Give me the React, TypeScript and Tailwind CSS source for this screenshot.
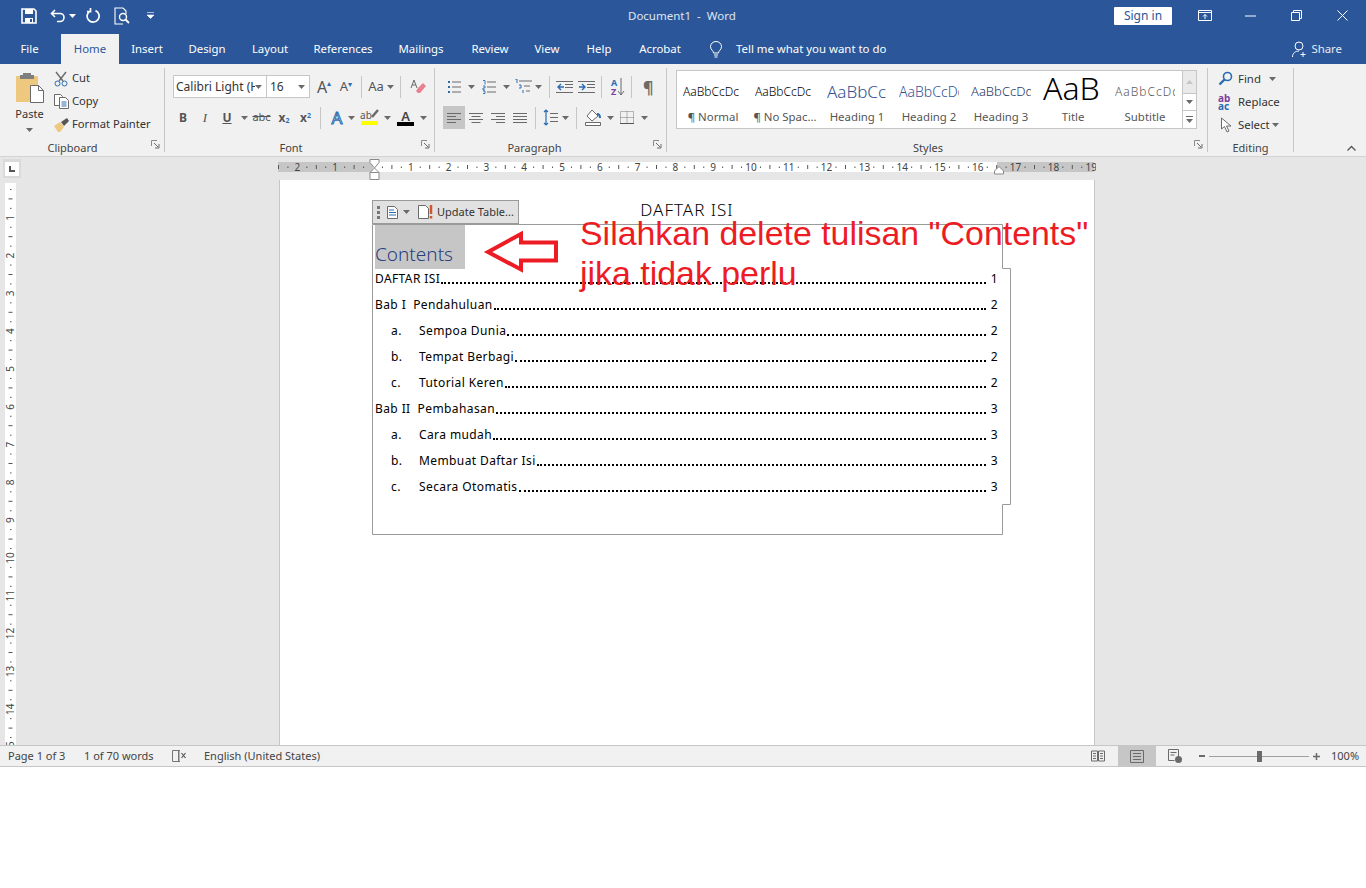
import type { ReactNode } from "react";

const tabs = [
  { label: "File", w: "w-[59px]" },
  { label: "Home", w: "w-[58px]", active: true },
  { label: "Insert", w: "w-[56px]" },
  { label: "Design", w: "w-[64px]" },
  { label: "Layout", w: "w-[62px]" },
  { label: "References", w: "w-[84px]" },
  { label: "Mailings", w: "w-[72px]" },
  { label: "Review", w: "w-[66px]" },
  { label: "View", w: "w-[48px]" },
  { label: "Help", w: "w-[56px]" },
  { label: "Acrobat", w: "w-[66px]" },
];

const styleItems = [
  { preview: "AaBbCcDc", label: "¶ Normal", cls: "text-[12px] text-black" },
  { preview: "AaBbCcDc", label: "¶ No Spac...", cls: "text-[12px] text-black" },
  { preview: "AaBbCcDd", label: "Heading 1", cls: "text-[17px] text-[#2f5496]" },
  { preview: "AaBbCcDd", label: "Heading 2", cls: "text-[14px] text-[#2f5496]" },
  { preview: "AaBbCcDd", label: "Heading 3", cls: "text-[13px] text-[#1f3763]" },
  { preview: "AaB", label: "Title", cls: "text-[32px] text-black -mt-2" },
  { preview: "AaBbCcDd", label: "Subtitle", cls: "text-[12px] tracking-[1px] text-[#5a5a5a]" },
];

const tocRows = [
  { text: "DAFTAR ISI", page: "1" },
  { text: "Bab I  Pendahuluan", page: "2" },
  { mark: "a.", text: "Sempoa Dunia", page: "2" },
  { mark: "b.", text: "Tempat Berbagi", page: "2" },
  { mark: "c.", text: "Tutorial Keren", page: "2" },
  { text: "Bab II  Pembahasan", page: "3" },
  { mark: "a.", text: "Cara mudah", page: "3" },
  { mark: "b.", text: "Membuat Daftar Isi", page: "3" },
  { mark: "c.", text: "Secara Otomatis", page: "3" },
];

const CM = 37.8;

const Caret = ({ white }: { white?: boolean }) => (
  <svg width="7" height="4" viewBox="0 0 7 4" className="shrink-0">
    <path d="M0 0h7L3.5 4z" fill={white ? "#fff" : "#6a6a6a"} />
  </svg>
);

const Launcher = () => (
  <svg width="9" height="9" viewBox="0 0 9 9" className="absolute right-[4px] bottom-[3px]">
    <path d="M.5 6V.5H6" fill="none" stroke="#8a8a8a" />
    <path d="M3 3l4 4M8 4v4H4" fill="none" stroke="#6a6a6a" />
  </svg>
);

const Sep = ({ h = "h-[22px]", m = "mx-0" }: { h?: string; m?: string }) => (
  <div className={`w-px bg-[#c6c6c6] shrink-0 ${h} ${m}`} />
);

const Cell = ({ w, children, on }: { w: string; children: ReactNode; on?: boolean }) => (
  <div className={`${w} h-[23px] flex items-center justify-center shrink-0 ${on ? "bg-[#c6c6c6]" : ""}`}>
    {children}
  </div>
);

const Lines = ({ d }: { d: string }) => (
  <svg width="16" height="14" viewBox="0 0 16 14">
    <path d={d} stroke="#6a6a6a" fill="none" />
  </svg>
);

const Group = ({
  w,
  label,
  pad = "",
  launcher = true,
  children,
}: {
  w: string;
  label: string;
  pad?: string;
  launcher?: boolean;
  children: ReactNode;
}) => (
  <div className={`${w} h-[84px] relative border-r border-[#c6c6c6] shrink-0`}>
    <div className="h-[72px] flow-root">{children}</div>
    <div className={`h-[16px] leading-[16px] text-center text-[11px] text-[#444] ${pad}`}>{label}</div>
    {launcher && <Launcher />}
  </div>
);

function TitleBar() {
  return (
    <div className="h-[34px] flex items-center text-white shrink-0 relative pb-[3px]">
      <div className="flex items-center ml-[21px]">
        <svg width="16" height="16" viewBox="0 0 16 16">
          <path d="M1 1h12l2 2v12H1z" fill="none" stroke="#fff" strokeWidth="1.6" />
          <path d="M4 1h8v5H4zM4 10h8v5H4z" fill="#fff" />
          <path d="M9 11h2v3H9z" fill="#2b579a" />
        </svg>
        <svg width="16" height="14" viewBox="0 0 16 14" className="ml-[13px]">
          <path d="M5 1L1.5 4.5 5 8M2 4.5h8a4 4 0 0 1 0 8H7" fill="none" stroke="#fff" strokeWidth="1.6" />
        </svg>
        <div className="ml-[3px]"><Caret white /></div>
        <svg width="15" height="15" viewBox="0 0 15 15" className="ml-[9px]">
          <path d="M10.5 2.6a6 6 0 1 1-5 .1M5.5 0v3.6H2" fill="none" stroke="#fff" strokeWidth="1.7" />
        </svg>
        <svg width="16" height="18" viewBox="0 0 16 18" className="ml-[14px]">
          <path d="M9 1H1v16h8M9 1l3 3v3" fill="none" stroke="#fff" strokeWidth="1.1" />
          <circle cx="9" cy="10" r="3.5" fill="none" stroke="#fff" strokeWidth="1.4" />
          <path d="M11.5 12.5l3.5 3.5" stroke="#fff" strokeWidth="1.8" />
        </svg>
        <svg width="7" height="7" viewBox="0 0 7 7" className="ml-[17px]">
          <path d="M0 .5h7M0 3h7l-3.5 3.5z" fill="#fff" stroke="#fff" strokeWidth=".6" />
        </svg>
      </div>
      <div className="absolute left-[628px] top-[8px] text-[11.5px] leading-[16px] text-[#dfe6f1] whitespace-pre">Document1  -  Word</div>
      <div className="ml-auto flex items-center">
        <div className="w-[58px] h-[18px] bg-white rounded-[1px] text-[#2b579a] text-[12px] leading-[18px] text-center mr-[26px]">Sign in</div>
        <svg width="14" height="11" viewBox="0 0 14 11" className="mr-[33px]">
          <path d="M.5.5h13v10H.5zM.5 2.5h13" fill="none" stroke="#fff" />
          <path d="M7 9V4.500M5 6.500l2-2 2 2" fill="none" stroke="#fff" />
        </svg>
        <svg width="11" height="2" viewBox="0 0 11 2" className="mr-[35px]"><path d="M0 1h11" stroke="#fff" /></svg>
        <svg width="11" height="11" viewBox="0 0 11 11" className="mr-[35px]">
          <path d="M.5 2.500h8v8h-8zM2.500 2.500v-2h8v8h-2" fill="none" stroke="#fff" />
        </svg>
        <svg width="11" height="11" viewBox="0 0 11 11" className="mr-[18px]">
          <path d="M.5.5l10 10M10.500.5l-10 10" stroke="#fff" />
        </svg>
      </div>
    </div>
  );
}

function TabBar() {
  return (
    <div className="h-[30px] flex text-[11.4px] text-white shrink-0">
      {tabs.map((t) => (
        <div
          key={t.label}
          className={`${t.w} flex items-center justify-center ${t.active ? "bg-[#f1f1f1] text-[#2b579a] ml-[2px]" : ""}`}
        >
          {t.label}
        </div>
      ))}
      <div className="flex items-center ml-[16px]">
        <svg width="14" height="17" viewBox="0 0 14 17">
          <path d="M4.500 12C4.500 9.500 1.500 9 1.500 5.500a5.500 5 0 0 1 11 0C12.500 9 9.500 9.500 9.500 12zM5 14h4M5.500 16h3" fill="none" stroke="#fff" />
        </svg>
        <span className="ml-[13px]">Tell me what you want to do</span>
      </div>
      <div className="ml-auto flex items-center mr-[24px] text-[#e6ebf3]">
        <svg width="15" height="17" viewBox="0 0 15 17">
          <circle cx="7" cy="5" r="4" fill="none" stroke="#fff" />
          <path d="M.5 16c0-4 3-6 6.500-6M11 11v5M8.500 13.500h5" fill="none" stroke="#fff" />
        </svg>
        <span className="ml-[4px]">Share</span>
      </div>
    </div>
  );
}

function Clipboard() {
  return (
    <Group w="w-[165px]" label="Clipboard" pad="pr-[19px]">
      <div className="flex">
        <div className="w-[54px] pl-[5px] flex flex-col items-center text-[11px]">
          <svg width="30" height="31" viewBox="0 0 30 31" className="mt-[4px]">
            <path d="M1 4h22v26H1z" fill="#edc87e" />
            <path d="M8 1h8v2h3v4H5V3h3z" fill="#7f7f7f" />
            <path d="M15.500 13.500h8l5 5v12h-13z" fill="#fff" stroke="#6a6a6a" />
            <path d="M23.500 13.500v5h5" fill="none" stroke="#6a6a6a" />
          </svg>
          <span className="leading-[16px] mt-[3px] text-[#333]">Paste</span>
          <div className="mt-[6px]"><Caret /></div>
        </div>
        <div className="flex flex-col text-[11.2px] text-[#333] -mt-[1px]">
          {[
            {
              label: "Cut",
              icon: (
                <svg width="14" height="16" viewBox="0 0 14 16">
                  <path d="M2 1l7 9M12 1L5 10" stroke="#6a6a6a" strokeWidth="1.4" fill="none" />
                  <circle cx="3.500" cy="12.500" r="2.500" fill="none" stroke="#2b6cb0" />
                  <circle cx="10.500" cy="12.500" r="2.500" fill="none" stroke="#2b6cb0" />
                </svg>
              ),
            },
            {
              label: "Copy",
              icon: (
                <svg width="15" height="15" viewBox="0 0 15 15">
                  <path d="M.5.5h6l2 2v9H.5z" fill="#fff" stroke="#6a6a6a" />
                  <path d="M5.500 3.500h6l3 3v8h-9z" fill="#fff" stroke="#6a6a6a" />
                  <path d="M7.500 8h5M7.500 10h5M7.500 12h5" stroke="#2b6cb0" />
                </svg>
              ),
            },
            {
              label: "Format Painter",
              icon: (
                <svg width="16" height="15" viewBox="0 0 16 15">
                  <path d="M0 9l6-4 4 5-4 5H4z" fill="#edc87e" />
                  <path d="M7 5l6-4 2 3-5 5z" fill="#555" />
                </svg>
              ),
            },
          ].map((r) => (
            <div key={r.label} className="h-[23px] flex items-center">
              <div className="w-[18px] flex justify-start">{r.icon}</div>
              <span className="whitespace-nowrap">{r.label}</span>
            </div>
          ))}
        </div>
      </div>
    </Group>
  );
}

const LetterBtn = ({ cls, children }: { cls: string; children: ReactNode }) => (
  <span className={`text-[#555] ${cls}`}>{children}</span>
);

function FontGroup() {
  return (
    <Group w="w-[270px]" label="Font" pad="pr-[17px]">
      <div className="flex items-center pl-[8px] pt-[7px] h-[30px] text-[#333]">
        <div className="w-[94px] h-[23px] border border-[#c6c6c6] bg-white flex items-center pl-[2px] pr-[4px] text-[12px]">
          <span className="whitespace-nowrap overflow-hidden flex-1">Calibri Light (H</span>
          <Caret />
        </div>
        <div className="w-[44px] -ml-px h-[23px] border border-[#c6c6c6] bg-white flex items-center pl-[3px] pr-[4px] text-[12px]">
          <span className="flex-1">16</span>
          <Caret />
        </div>
        <div className="w-[22px] ml-[3px] text-center text-[16px] text-[#555] leading-none">
          A<span className="text-[8px] align-top text-[#2b6cb0]">▴</span>
        </div>
        <div className="w-[22px] text-center text-[13px] text-[#555] leading-none">
          A<span className="text-[8px] align-top text-[#2b6cb0]">▾</span>
        </div>
        <Sep m="ml-[4px]" />
        <div className="w-[38px] flex items-center justify-center gap-[3px] text-[13px] text-[#555]">Aa<Caret /></div>
        <Sep />
        <svg width="16" height="16" viewBox="0 0 16 16" className="ml-[9px]">
          <path d="M8 9l5-5 3 3-6 7H8L6 12z" fill="#e8808f" />
          <path d="M1 9L4 1l3 8M2.200 6h3.600" fill="none" stroke="#6a6a6a" />
        </svg>
      </div>
      <div className="flex items-center pl-[7px] mt-[8px] text-[12px]">
        <Cell w="w-[22px]"><LetterBtn cls="font-bold">B</LetterBtn></Cell>
        <Cell w="w-[22px]"><LetterBtn cls="italic font-['Liberation_Serif',serif] text-[13px]">I</LetterBtn></Cell>
        <Cell w="w-[22px]"><LetterBtn cls="font-bold underline">U</LetterBtn></Cell>
        <Cell w="w-[12px]"><Caret /></Cell>
        <Cell w="w-[23px]"><LetterBtn cls="line-through text-[11px]">abc</LetterBtn></Cell>
        <Cell w="w-[22px]"><LetterBtn cls="font-bold">x<sub className="text-[7px] text-[#2b6cb0]">2</sub></LetterBtn></Cell>
        <Cell w="w-[21px]"><LetterBtn cls="font-bold">x<sup className="text-[7px] text-[#2b6cb0]">2</sup></LetterBtn></Cell>
        <Sep m="ml-[4px] mr-[7px]" />
        <Cell w="w-[18px]">
          <span className="text-[17px] leading-none text-white [-webkit-text-stroke:1px_#2b6cb0]">A</span>
        </Cell>
        <Cell w="w-[10px]"><Caret /></Cell>
        <Cell w="w-[27px]">
          <div className="relative flex flex-col items-center">
            <span className="text-[10px] leading-[11px] text-[#555] pr-[7px]">ab</span>
            <svg width="9" height="11" viewBox="0 0 9 11" className="absolute right-0 -top-[1px]">
              <path d="M8 1L2 8" stroke="#6a6a6a" strokeWidth="2.500" />
            </svg>
            <div className="w-[17px] h-[4px] bg-[#ffff00]" />
          </div>
        </Cell>
        <Cell w="w-[9px]"><Caret /></Cell>
        <Cell w="w-[27px]">
          <div className="flex flex-col items-center">
            <span className="text-[13px] leading-[12px] text-[#444] font-semibold">A</span>
            <div className="w-[17px] h-[4px] bg-black" />
          </div>
        </Cell>
        <Cell w="w-[8px]"><Caret /></Cell>
      </div>
    </Group>
  );
}

function Paragraph() {
  return (
    <Group w="w-[232px]" label="Paragraph" pad="pr-[32px]">
      <div className="flex items-center pl-[8px] pt-[7px] h-[30px]">
        <Cell w="w-[22px]">
          <svg width="14" height="14" viewBox="0 0 14 14">
            <path d="M1 1h2v2H1zM1 6h2v2H1zM1 11h2v2H1z" fill="#2b6cb0" />
            <path d="M5 2h9M5 7h9M5 12h9" stroke="#6a6a6a" />
          </svg>
        </Cell>
        <Cell w="w-[13px]"><Caret /></Cell>
        <Cell w="w-[22px]">
          <svg width="14" height="14" viewBox="0 0 14 14">
            <path d="M1 .5h2v4M1 6h2v2H1v2h2M1 11h2v2.500H1" fill="none" stroke="#2b6cb0" strokeWidth=".9" />
            <path d="M5 2h9M5 7h9M5 12h9" stroke="#6a6a6a" />
          </svg>
        </Cell>
        <Cell w="w-[13px]"><Caret /></Cell>
        <Cell w="w-[20px]">
          <svg width="18" height="15" viewBox="0 0 18 15">
            <path d="M1 0h2v4M5 6h2v3H5M9 11v3" fill="none" stroke="#2b6cb0" />
            <path d="M5 2h13M10 7h6M12 12h4" stroke="#6a6a6a" />
          </svg>
        </Cell>
        <Cell w="w-[11px]"><Caret /></Cell>
        <Sep m="ml-[5px] mr-[4px]" />
        <Cell w="w-[20px]">
          <svg width="17" height="12" viewBox="0 0 17 12">
            <path d="M0 .5h17M9 3.500h8M9 6.500h8M0 11.500h17" stroke="#6a6a6a" />
            <path d="M8 6H2M5 3L2 6l3 3" fill="none" stroke="#2b6cb0" strokeWidth="1.4" />
          </svg>
        </Cell>
        <Cell w="w-[24px]">
          <svg width="17" height="12" viewBox="0 0 17 12">
            <path d="M0 .5h17M9 3.500h8M9 6.500h8M0 11.500h17" stroke="#6a6a6a" />
            <path d="M1 6h6M4 3l3 3-3 3" fill="none" stroke="#2b6cb0" strokeWidth="1.4" />
          </svg>
        </Cell>
        <Sep m="ml-[3px] mr-[5px]" />
        <Cell w="w-[22px]">
          <div className="flex items-center">
            <div className="flex flex-col text-[9px] leading-[9px] font-bold">
              <span className="text-[#2b6cb0]">A</span>
              <span className="text-[#7c3fa0]">Z</span>
            </div>
            <svg width="8" height="18" viewBox="0 0 8 18"><path d="M4 0v17M1 13l3 4 3-4" fill="none" stroke="#6a6a6a" /></svg>
          </div>
        </Cell>
        <Sep m="ml-[2px] mr-[11px]" />
        <span className="text-[16px] font-bold text-[#6a6a6a] leading-none">¶</span>
      </div>
      <div className="flex items-center pl-[8px] mt-[8px]">
        <Cell w="w-[22px]" on><Lines d="M1 2.500h14M1 5.500h9M1 8.500h14M1 11.500h9" /></Cell>
        <Cell w="w-[22px]"><Lines d="M1 2.500h14M3.500 5.500h9M1 8.500h14M3.500 11.500h9" /></Cell>
        <Cell w="w-[22px]"><Lines d="M1 2.500h14M6 5.500h9M1 8.500h14M6 11.500h9" /></Cell>
        <Cell w="w-[22px]"><Lines d="M1 2.500h14M1 5.500h14M1 8.500h14M1 11.500h14" /></Cell>
        <Sep m="ml-[4px] mr-[4px]" />
        <Cell w="w-[20px]">
          <svg width="15" height="17" viewBox="0 0 15 17">
            <path d="M3 1v15M1 3l2-2 2 2M1 14l2 2 2-2" fill="none" stroke="#2b6cb0" strokeWidth="1.2" />
            <path d="M7 4.500h8M7 8.500h8M7 12.500h8" stroke="#6a6a6a" />
          </svg>
        </Cell>
        <Cell w="w-[11px]"><Caret /></Cell>
        <Sep m="ml-[5px] mr-[4px]" />
        <Cell w="w-[24px]">
          <svg width="16" height="17" viewBox="0 0 16 17">
            <path d="M7 1L2 7l5 5 6-5z" fill="#fff" stroke="#6a6a6a" />
            <path d="M12 5c2 0 3 2 3 4" fill="none" stroke="#2b6cb0" strokeWidth="2" />
            <path d="M.5 13.500h15v3H.5z" fill="#fff" stroke="#6a6a6a" />
          </svg>
        </Cell>
        <Cell w="w-[10px]"><Caret /></Cell>
        <Cell w="w-[24px]">
          <svg width="14" height="13" viewBox="0 0 14 13">
            <path d="M.5.500h13v12H.5zM7 .5v12M.5 6.500h13" fill="none" stroke="#777" strokeDasharray="1 1" />
            <path d="M0 12.500h14" stroke="#555" />
          </svg>
        </Cell>
        <Cell w="w-[10px]"><Caret /></Cell>
      </div>
    </Group>
  );
}

function Styles() {
  return (
    <Group w="w-[541px]" label="Styles" pad="pr-[18px]">
      <div className="ml-[9px] mt-[2px] w-[521px] h-[59px] flex bg-white border border-[#c6c6c6]">
        <div className="flex-1 flex">
          {styleItems.map((s, i) => (
            <div key={i} className="w-[72px] flex flex-col items-center shrink-0">
              <div className="w-[60px] h-[38px] pt-[3px] overflow-hidden flex items-center whitespace-nowrap font-light">
                <span className={`leading-none ${s.cls}`}>{s.preview}</span>
              </div>
              <div className="text-[11.4px] leading-[16px] text-[#555] whitespace-nowrap">{s.label}</div>
            </div>
          ))}
        </div>
        <div className="w-[14px] flex flex-col border-l border-[#c6c6c6] shrink-0 items-stretch">
          <div className="h-[22px] bg-[#eaeaea] flex items-center justify-center">
            <svg width="7" height="4" viewBox="0 0 7 4"><path d="M0 4h7L3.500 0z" fill="#c6c6c6" /></svg>
          </div>
          <div className="h-[18px] border-y border-[#c6c6c6] flex items-center justify-center"><Caret /></div>
          <div className="flex-1 flex flex-col items-center justify-center gap-[2px]">
            <div className="w-[7px] h-px bg-[#6a6a6a]" />
            <Caret />
          </div>
        </div>
      </div>
    </Group>
  );
}

function Editing() {
  return (
    <Group w="w-[86px]" label="Editing" launcher={false}>
      <div className="flex flex-col -mt-[1px] pl-[10px] text-[11.4px] text-[#333]">
        <div className="h-[23px] flex items-center">
          <svg width="15" height="15" viewBox="0 0 15 15">
            <circle cx="9.500" cy="5.500" r="4" fill="none" stroke="#2b6cb0" strokeWidth="1.6" />
            <path d="M6.500 8.500L1.500 13.500" stroke="#2b6cb0" strokeWidth="2.400" />
          </svg>
          <span className="ml-[5px]">Find</span>
          <div className="ml-[8px]"><Caret /></div>
        </div>
        <div className="h-[23px] flex items-center">
          <div className="w-[15px] text-[10px] leading-[8px] font-bold">
            <div className="text-[#7c3fa0]">ab</div>
            <div className="text-[#2b6cb0]">ac</div>
          </div>
          <span className="ml-[5px]">Replace</span>
        </div>
        <div className="h-[23px] flex items-center">
          <svg width="13" height="16" viewBox="0 0 13 16" className="ml-[2px]">
            <path d="M1.500 1v11l3-2.500L7 15l2-1-2.500-5H11z" fill="#fff" stroke="#6a6a6a" />
          </svg>
          <span className="ml-[5px]">Select</span>
          <div className="ml-[2px]"><Caret /></div>
        </div>
      </div>
    </Group>
  );
}

function HorizontalRuler() {
  const marks = [];
  for (let q = -10; q <= 76; q++) {
    const x = 95 + (q * CM) / 4;
    if (x < 0 || x > 816) continue;
    if (q % 4 === 0) {
      if (q !== 0) {
        marks.push(
          <text key={q} x={x} y="8.500" textAnchor="middle" fontSize="10" fill="#444">
            {Math.abs(q / 4)}
          </text>
        );
      }
    } else if (q % 2 === 0) {
      marks.push(<path key={q} d={`M${x} 3v4`} stroke="#555" />);
    } else {
      marks.push(<path key={q} d={`M${x} 4.500v1.500`} stroke="#555" />);
    }
  }
  return (
    <svg width="818" height="23" viewBox="0 0 818 23" className="ml-[278px] shrink-0">
      <g transform="translate(0 5)">
        <rect x="0" y="0" width="95" height="10" fill="#c6c6c6" />
        <rect x="95" y="0" width="624" height="10" fill="#fff" />
        <rect x="719" y="0" width="97" height="10" fill="#c6c6c6" />
        {marks}
      </g>
      <path d="M92 2.500h9v3l-4.500 5.500L92 5.500z" fill="#fff" stroke="#8a8a8a" />
      <path d="M92 15.500l4.500-4.500 4.500 4.500z" fill="#fff" stroke="#8a8a8a" />
      <path d="M92 15.500h9v7h-9z" fill="#fff" stroke="#8a8a8a" />
      <path d="M716.500 14l4.500-4.500 4.500 4.500v3h-9z" fill="#fff" stroke="#8a8a8a" />
    </svg>
  );
}

function VerticalRuler() {
  const marks = [];
  for (let q = 1; q <= 60; q++) {
    const y = (q * CM) / 4 - 3;
    if (q % 4 === 0) {
      marks.push(
        <text key={q} transform={`translate(9 ${y}) rotate(-90)`} textAnchor="middle" fontSize="10" fill="#444">
          {q / 4}
        </text>
      );
    } else if (q % 2 === 0) {
      marks.push(<path key={q} d={`M3.500 ${y}h4`} stroke="#555" />);
    } else {
      marks.push(<path key={q} d={`M5 ${y}h1.500`} stroke="#555" />);
    }
  }
  return (
    <svg width="11" height="562" viewBox="0 0 11 562" className="ml-[5px] mt-[3px] bg-white shrink-0">
      {marks}
    </svg>
  );
}

function Page() {
  return (
    <div className="relative w-[816px] h-[565px] ml-[263px] bg-white border-x border-[#c6c6c6] shrink-0 overflow-hidden">
      <div className="pt-[21px] text-center text-[17px] tracking-[1px] leading-[18px] text-black font-light">
        DAFTAR ISI
      </div>
      <div className="relative ml-[92px] mt-[5px] w-[640px] h-[312px] pt-[1px] pl-[3px]">
        <svg width="640" height="312" viewBox="0 0 640 312" className="absolute left-0 top-0">
          <path d="M.5.500H630.500V44.500H638.500V280.500H630.500V310.500H.5z" fill="none" stroke="#9a9a9a" />
        </svg>
        <div className="relative w-[90px] h-[44px] -mb-[3px] bg-[#c6c6c6] flex items-end text-[19px] leading-[26px] text-[#27407f] font-light pb-[2px]">
          Contents
        </div>
        <div className="relative w-[623px]">
          {tocRows.map((r, i) => (
            <div key={i} className="h-[26px] flex items-center text-[12px] tracking-[0.4px] text-black whitespace-pre">
              {r.mark && <span className="w-[44px] pl-[16px] shrink-0">{r.mark}</span>}
              <span>{r.text}</span>
              <span className="flex-1 mt-[8px] mx-[1px] border-b-2 border-dotted border-black" />
              <span className="w-[11px] text-right">{r.page}</span>
            </div>
          ))}
        </div>
      </div>
      <div className="absolute left-[92px] top-[20px] w-[147px] h-[24px] bg-[#e1e1e1] border border-[#9a9a9a] flex items-center text-[11px] text-[#333]">
        <div className="w-[3px] ml-[4px] flex flex-col gap-[2px]">
          <div className="h-[3px] bg-[#777]" />
          <div className="h-[3px] bg-[#777]" />
          <div className="h-[3px] bg-[#777]" />
        </div>
        <svg width="11" height="13" viewBox="0 0 11 13" className="ml-[7px]">
          <path d="M.5.500h7l3 3v9H.5z" fill="#fff" stroke="#6a6a6a" />
          <path d="M2 4h5M2 6.500h7M2 9h7" stroke="#2b6cb0" />
        </svg>
        <div className="ml-[5px]"><Caret /></div>
        <svg width="16" height="14" viewBox="0 0 16 14" className="ml-[8px]">
          <path d="M.5.500h7l3 3v10H.5z" fill="#fff" stroke="#6a6a6a" />
          <path d="M13 0v9" stroke="#d2552f" strokeWidth="2.500" />
          <path d="M13 11v2.500" stroke="#d2552f" strokeWidth="2.500" />
        </svg>
        <span className="ml-[3px] whitespace-nowrap">Update Table...</span>
      </div>
      <svg width="76" height="44" viewBox="0 0 76 44" className="absolute left-[203px] top-[51px]">
        <path d="M5 21L38 3V11.500H73V29.500H38V38.500z" fill="none" stroke="#ed1c24" strokeWidth="4" />
      </svg>
      <div className="absolute left-[300px] top-[33px] text-[33.900px] leading-[40px] text-[#ed1c24] font-['Liberation_Sans',sans-serif] whitespace-nowrap">
        <div>Silahkan delete tulisan "Contents"</div>
        <div>jika tidak perlu</div>
      </div>
    </div>
  );
}

function StatusBar() {
  return (
    <div className="h-[22px] bg-[#f1f1f1] border-y border-[#c6c6c6] flex items-center text-[11px] text-[#444] shrink-0">
      <span className="ml-[8px] w-[76px]">Page 1 of 3</span>
      <span className="w-[88px]">1 of 70 words</span>
      <svg width="15" height="14" viewBox="0 0 15 14" className="mr-[17px]">
        <path d="M6.500 1.500H.5v11h6M6.500 1v12M8 1.500h-1v11h1" fill="none" stroke="#777" />
        <path d="M9.500 4l4 5M13.500 4l-4 5" stroke="#555" strokeWidth="1.2" />
      </svg>
      <span>English (United States)</span>
      <div className="ml-auto flex items-center h-full">
        <svg width="14" height="13" viewBox="0 0 14 13" className="mr-[13px]">
          <path d="M.5 1h6v10h-6zM7.500 1h6v10h-6zM2 3.500h3M2 6h3M2 8.500h3M9 3.500h3M9 6h3M9 8.500h3" fill="none" stroke="#6a6a6a" />
        </svg>
        <div className="w-[38px] h-full bg-[#c6c6c6] flex items-center justify-center">
          <svg width="14" height="13" viewBox="0 0 14 13">
            <path d="M.5.500h13v12H.5zM3 3.500h8M3 6.500h8M3 9.500h8" fill="none" stroke="#6a6a6a" />
          </svg>
        </div>
        <svg width="14" height="14" viewBox="0 0 14 14" className="ml-[12px]">
          <path d="M.5.500h10v9M.5.500v11h6M2.500 3.500h6M2.500 6h4" fill="none" stroke="#6a6a6a" />
          <circle cx="10.500" cy="10.500" r="3.500" fill="#6a6a6a" />
        </svg>
        <div className="ml-[17px] w-[6px] h-[2px] bg-[#6a6a6a]" />
        <div className="ml-[4px] relative w-[100px] h-px bg-[#a0a0a0]">
          <div className="absolute left-[48px] -top-[5px] w-[5px] h-[11px] bg-[#6a6a6a]" />
        </div>
        <svg width="7" height="7" viewBox="0 0 7 7" className="ml-[4px]">
          <path d="M3.500 0v7M0 3.500h7" stroke="#6a6a6a" strokeWidth="1.500" />
        </svg>
        <span className="ml-[11px] w-[35px]">100%</span>
      </div>
    </div>
  );
}

export default function App() {
  return (
    <div className="w-[1366px] h-[888px] bg-white flex flex-col overflow-hidden font-['Noto_Sans',sans-serif]">
      <div className="bg-[#2b579a] flex flex-col shrink-0">
        <TitleBar />
        <TabBar />
      </div>
      {/* Ribbon */}
      <div className="h-[93px] bg-[#f1f1f1] border-b border-[#d4d4d4] flex pt-[4px] shrink-0">
        <Clipboard />
        <FontGroup />
        <Paragraph />
        <Styles />
        <Editing />
        <div className="flex-1 relative">
          <svg width="9" height="6" viewBox="0 0 9 6" className="absolute left-[53px] top-[77px]">
            <path d="M.5 5.500l4-4 4 4" fill="none" stroke="#555" strokeWidth="1.3" />
          </svg>
        </div>
      </div>
      {/* Document area */}
      <div className="relative h-[588px] bg-[#e6e6e6] flex flex-col shrink-0 overflow-hidden">
        <HorizontalRuler />
        <div className="absolute left-[3px] top-[2px] w-[18px] h-[19px] bg-[#dadada] flex items-center justify-center">
          <div className="w-[14px] h-[14px] bg-white flex items-center justify-center">
            <div className="w-[6px] h-[6px] border-l-2 border-b-2 border-[#555]" />
          </div>
        </div>
        <div className="flex">
          <VerticalRuler />
          <Page />
        </div>
      </div>
      <StatusBar />
    </div>
  );
}
